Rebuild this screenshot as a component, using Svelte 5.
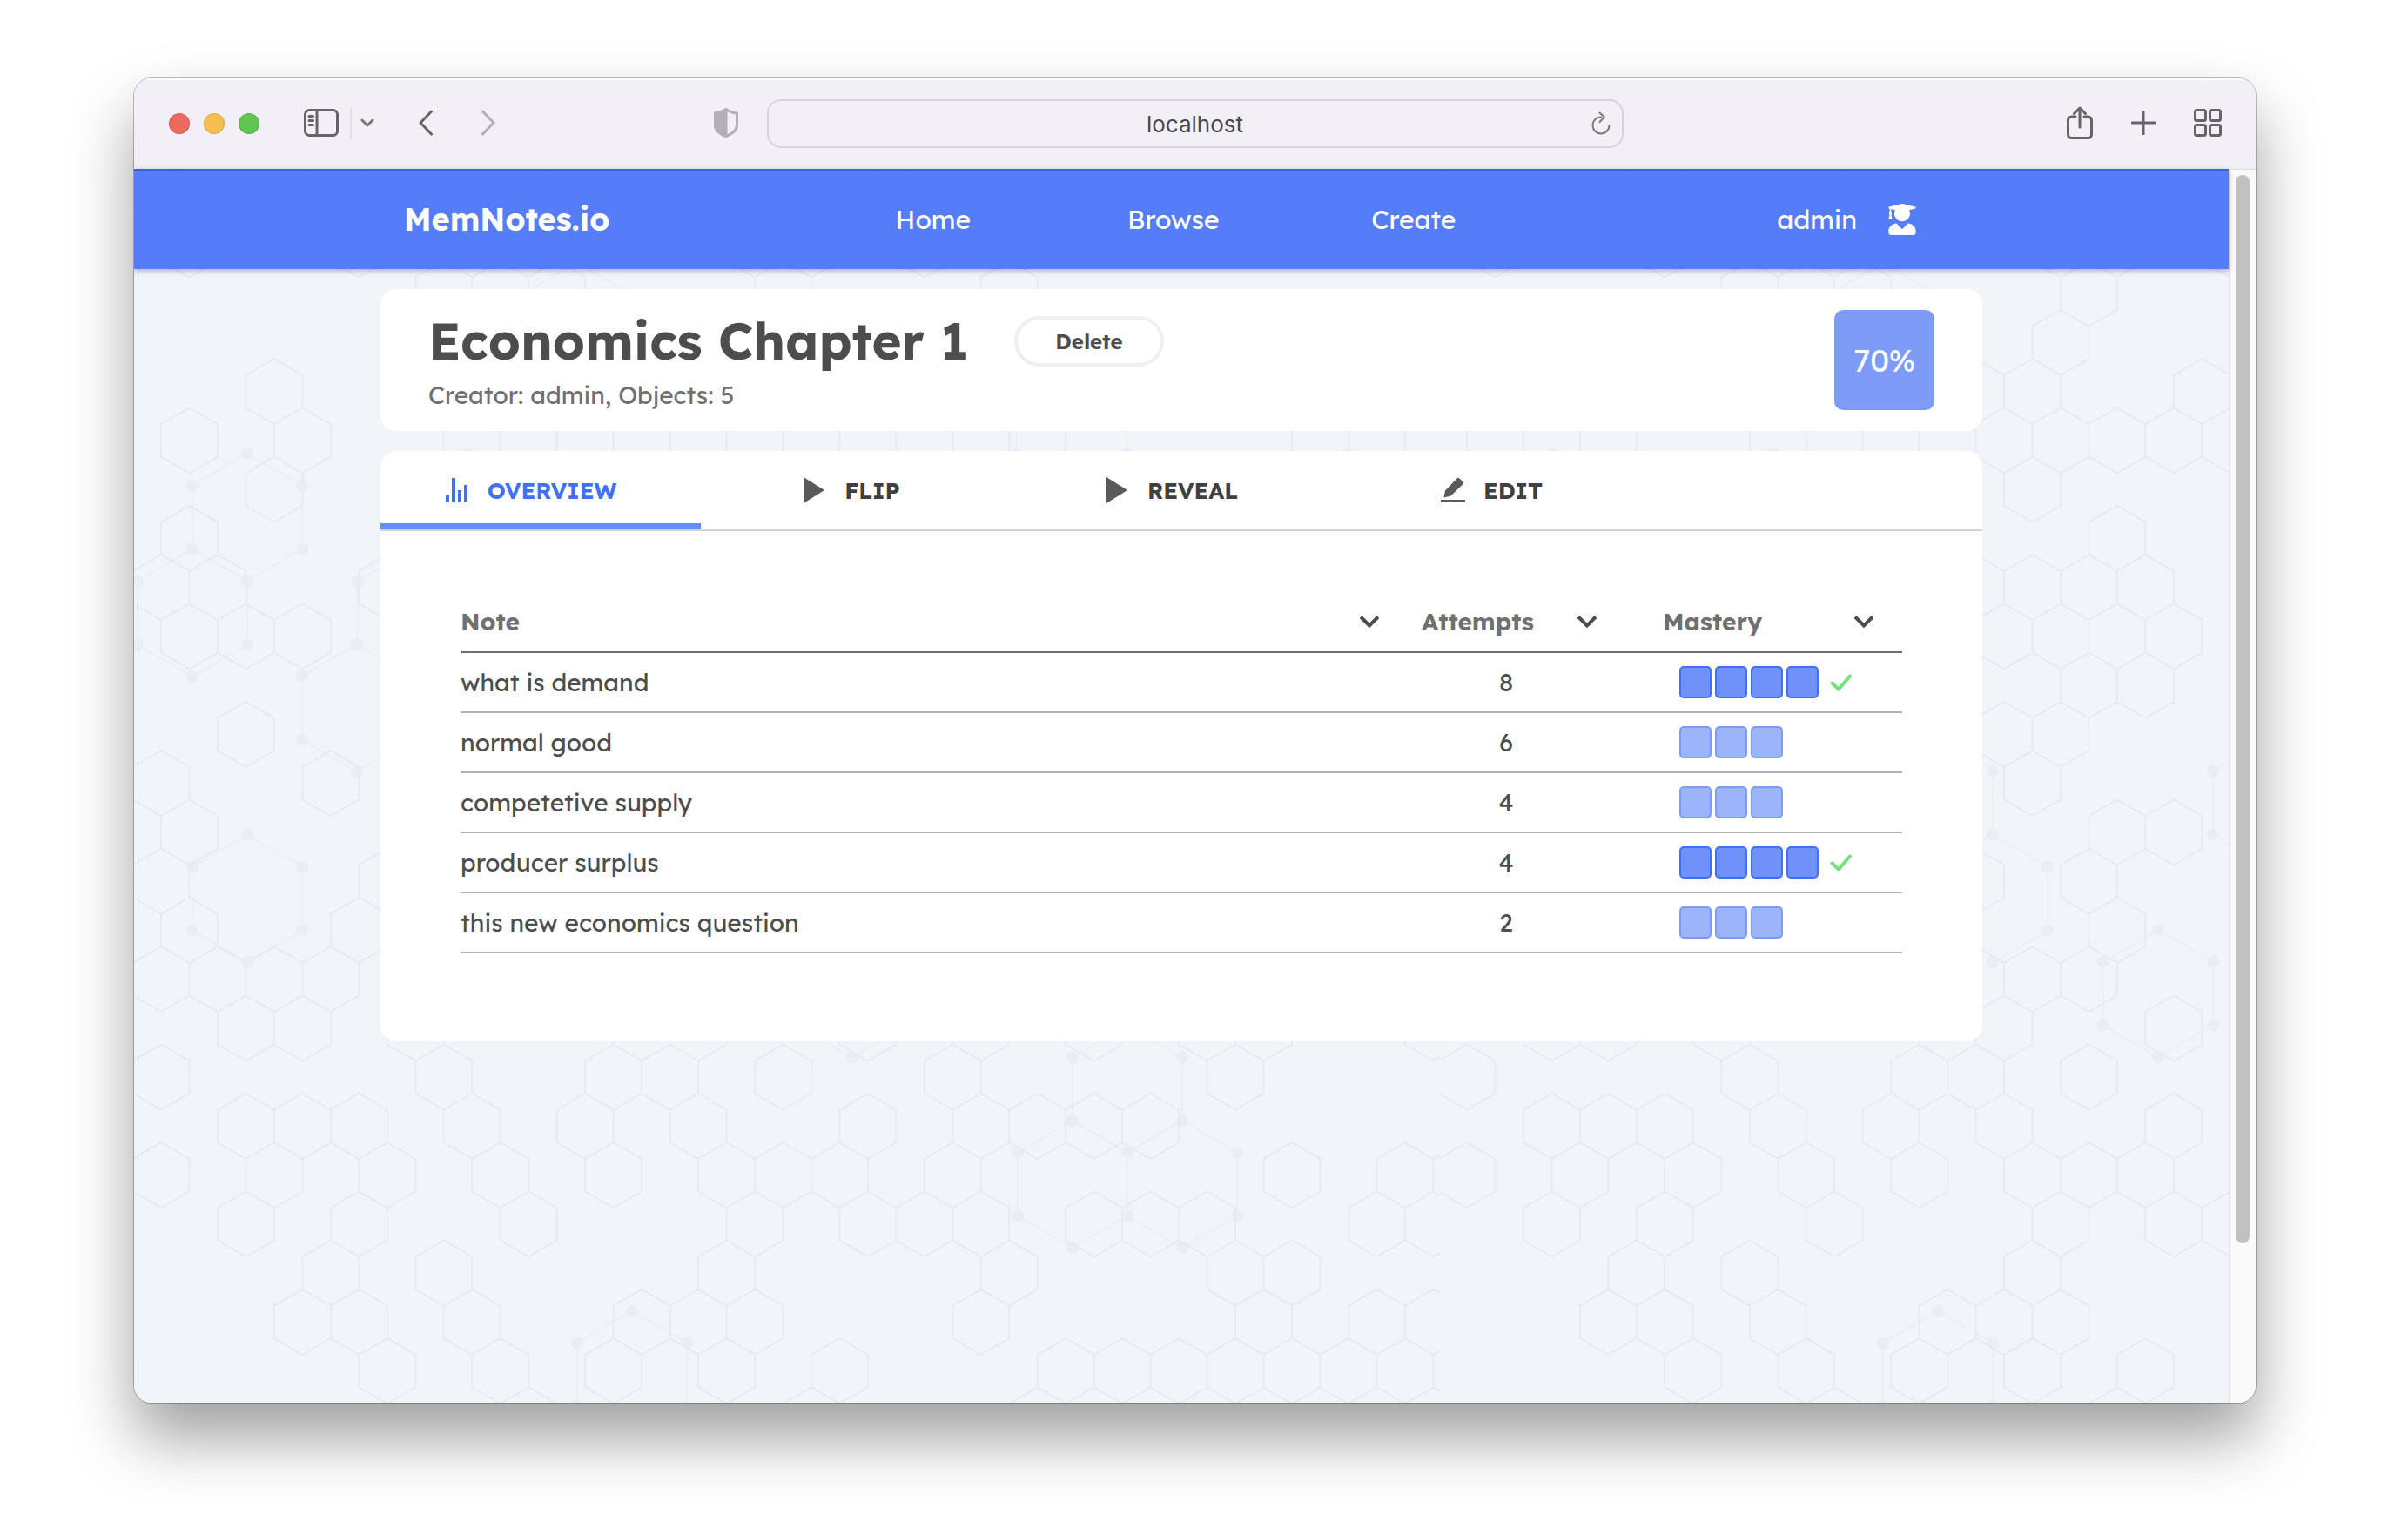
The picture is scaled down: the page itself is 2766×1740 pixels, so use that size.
<script>
  const notes = [
    { text: 'what is demand', attempts: 8, mastery: 4 },
    { text: 'normal good', attempts: 6, mastery: 3 },
    { text: 'competetive supply', attempts: 4, mastery: 3 },
    { text: 'producer surplus', attempts: 4, mastery: 4 },
    { text: 'this new economics question', attempts: 2, mastery: 3 }
  ];

  const tabs = [
    { label: 'OVERVIEW', icon: 'chart' },
    { label: 'FLIP', icon: 'play' },
    { label: 'REVEAL', icon: 'play' },
    { label: 'EDIT', icon: 'pen' }
  ];
  let active = $state('OVERVIEW');

  const links = ['Home', 'Browse', 'Create'];

  const columns = [
    { label: 'Note', cls: 'note' },
    { label: 'Attempts', cls: 'attempts' },
    { label: 'Mastery', cls: 'mastery' }
  ];

  // Honeycomb backdrop: filled cells per row, odd rows shifted by half a cell.
  const cells = [
    [0, 3, 4, 7, 13],
    [0, 3, 5, 6, 10, 11, 13],
    [5, 7, 11, 15],
    [10],
    [2, 9, 10, 13],
    [0, 2, 5, 6, 7, 8, 9, 10, 11, 12, 13, 14, 15, 20, 21],
    [2, 10],
    [0, 11],
    [0, 1, 4, 9, 10, 11, 12],
    [0, 1, 2, 9, 10, 11, 12],
    [11, 12],
    [1, 9, 10],
    [0, 3, 10],
    [0, 11, 12],
    [0, 4, 9, 11],
    [0, 3, 11],
    [0, 1, 2, 3, 9, 10, 11],
    [1, 2, 4, 8, 9, 12, 14, 16, 18, 19, 22],
    [0, 5, 8, 9, 11, 14, 19],
    [1, 2, 3, 5, 7, 9, 12, 14, 15, 16, 17],
    [0, 2, 4, 6, 8, 10, 11, 12, 14, 20, 22, 23],
    [1, 3, 6, 10, 12, 13, 14, 16, 17, 18, 21, 22],
    [3, 5, 10, 15, 19, 20],
    [2, 3, 5, 8, 9, 10, 14, 19, 21, 22],
    [4, 6, 8, 10, 12, 16, 17, 18, 19, 20, 21, 22, 23],
    [6, 11, 15]
  ];
  const molecules = [
    [509, 181], [1077, 291], [130, 400], [383, 400], [1014, 400], [1141, 400], [1393, 400],
    [67, 510], [320, 510], [256, 619], [572, 728], [951, 728], [130, 838], [635, 838],
    [825, 947], [1141, 1057], [1078, 1166], [1204, 1166], [572, 1385]
  ];

  function corners(x, y, r) {
    const w = r * 0.866;
    return [
      [x, y - r], [x + w, y - r / 2], [x + w, y + r / 2],
      [x, y + r], [x - w, y + r / 2], [x - w, y - r / 2]
    ];
  }
  const outline = (x, y, r) => 'M' + corners(x, y, r).map((p) => p.join(' ')).join('L') + 'Z';

  const comb = cells
    .map((row, r) =>
      row.map((m) => outline(31 + 64.95 * m + (r % 2 ? 32.475 : 0), 30.6 + 56.25 * r, 37.5)).join('')
    )
    .join('');
  const bonds = molecules.map(([x, y]) => outline(x, y, 73)).join('');
  const atoms = molecules.flatMap(([x, y]) => corners(x, y, 73));
</script>

{#snippet chevron()}
  <svg class="chev" viewBox="0 0 24 16" aria-hidden="true"><path d="M2 2.500l10 10 10-10" /></svg>
{/snippet}

<div class="desktop">
  <div class="window">
    <header class="toolbar">
      <div class="left">
        <div class="lights"><i class="red"></i><i class="yellow"></i><i class="green"></i></div>
        <button class="side" aria-label="Sidebar">
          <svg width="40" height="32" viewBox="0 0 40 32"><rect x="1.500" y="1.500" width="37" height="29" rx="5" /><path d="M15 2v28M6 8.500h4.500M6 13.500h4.500M6 18.500h4.500" /></svg>
        </button>
        <span class="rule"></span>
        <button class="more" aria-label="Sidebar options">
          <svg width="16" height="10" viewBox="0 0 16 10"><path d="M2 2l6 6 6-6" /></svg>
        </button>
        <button class="back" aria-label="Back">
          <svg width="18" height="30" viewBox="0 0 18 30"><path d="M15.500 2L3 15l12.500 13" /></svg>
        </button>
        <button class="fwd" aria-label="Forward">
          <svg width="18" height="30" viewBox="0 0 18 30"><path d="M2.500 2L15 15 2.500 28" /></svg>
        </button>
        <button class="shield" aria-label="Privacy report">
          <svg width="28" height="34" viewBox="0 0 28 34"><path d="M14 1.500C10 4.500 6 5.500 1.500 6v13c0 7 5 10 12.500 13.500C21.500 29 26.500 26 26.500 19V6C22 5.500 18 4.500 14 1.500z" /><path class="half" d="M14 1.500C10 4.500 6 5.500 1.500 6v13c0 7 5 10 12.500 13.500z" /></svg>
        </button>
      </div>
      <form class="address">
        <input aria-label="Address" value="localhost" />
        <button type="button" aria-label="Reload">
          <svg width="24" height="28" viewBox="0 0 24 28"><path d="M12 6.500a9.500 9.500 0 1 0 9.500 9.500M10.500 1.500l5.500 5-5.500 5.500" /></svg>
        </button>
      </form>
      <div class="right">
        <button aria-label="Share">
          <svg width="30" height="38" viewBox="0 0 30 38"><path d="M10 12H5.500a4 4 0 0 0-4 4v16.500a4 4 0 0 0 4 4h19a4 4 0 0 0 4-4V16a4 4 0 0 0-4-4H20M15 24V2.500M8.500 8.500l6.500-6.500 6.500 6.500" /></svg>
        </button>
        <button aria-label="New tab">
          <svg width="28" height="28" viewBox="0 0 28 28"><path d="M14 1v26M1 14h26" /></svg>
        </button>
        <button aria-label="Tab overview">
          <svg width="32" height="32" viewBox="0 0 32 32"><rect x="1.500" y="1.500" width="12" height="12" rx="2" /><rect x="18.500" y="1.500" width="12" height="12" rx="2" /><rect x="1.500" y="18.500" width="12" height="12" rx="2" /><rect x="18.500" y="18.500" width="12" height="12" rx="2" /></svg>
        </button>
      </div>
    </header>

    <div class="viewport">
      <div class="page">
        <svg class="backdrop" aria-hidden="true">
          <defs>
            <pattern id="comb" width="1500" height="1500" patternUnits="userSpaceOnUse">
              <path class="bonds" d={bonds} />
              {#each atoms as [x, y]}
                <circle cx={x} cy={y} r="7" />
              {/each}
              <path class="comb" d={comb} />
            </pattern>
          </defs>
          <rect width="100%" height="100%" fill="url(#comb)" />
        </svg>

        <nav class="navbar">
          <div class="container bar">
            <a class="brand" href="#home">MemNotes.io</a>
            {#each links as link}
              <a class="link" href="#{link}">{link}</a>
            {/each}
            <a class="user" href="#profile">
              admin
              <svg width="32" height="36" viewBox="0 0 448 512" aria-hidden="true"><path d="M319.4 320.6L224 416l-95.4-95.4C57.1 323.7 0 382.2 0 454.4v9.6c0 26.500 21.500 48 48 48h352c26.500 0 48-21.500 48-48v-9.600c0-72.200-57.100-130.700-128.600-133.800zM13.600 79.800l6.400 1.500v58.400c-7 4.200-12 11.500-12 20.300 0 8.400 4.600 15.400 11.100 19.700L3.500 242c-1.700 6.900 2.100 14 7.600 14h41.800c5.500 0 9.300-7.100 7.600-14l-15.600-62.300C51.400 175.400 56 168.400 56 160c0-8.800-5-16.100-12-20.300V87.100l66 15.900c-8.600 17.200-14 36.400-14 57 0 70.700 57.300 128 128 128s128-57.300 128-128c0-20.600-5.300-39.800-14-57l96.300-23.200c18.200-4.400 18.200-27.100 0-31.500l-190.400-46c-13-3.100-26.700-3.100-39.700 0L13.600 48.200c-18.100 4.400-18.100 27.200 0 31.600z" /></svg>
            </a>
          </div>
        </nav>

        <main class="container">
          <section class="card head">
            <div>
              <div class="titlerow">
                <h1>Economics Chapter 1</h1>
                <button class="delete">Delete</button>
              </div>
              <p>Creator: admin, Objects: 5</p>
            </div>
            <div class="score">70%</div>
          </section>

          <section class="card">
            <div class="tabs" role="tablist">
              {#each tabs as tab}
                <button
                  role="tab"
                  aria-selected={active === tab.label}
                  class:active={active === tab.label}
                  onclick={() => (active = tab.label)}
                >
                  <svg width="30" height="30" viewBox="0 0 30 30" aria-hidden="true">
                    {#if tab.icon === 'chart'}
                      <path d="M2 20h4v9H2zM9 1h4v28H9zM16 15h4v14h-4zM23 9h4v20h-4z" />
                    {:else if tab.icon === 'play'}
                      <path d="M3 0l24 15L3 30z" />
                    {:else}
                      <path d="M1 26h28v3H1zM19.500 1.500q1.500-1.500 3 0l4 4q1 1 0 2.500L12.500 21.500 4.500 23.500l1.500-8z" />
                    {/if}
                  </svg>
                  {tab.label}
                </button>
              {/each}
            </div>

            <div class="body">
              <table>
                <thead>
                  <tr>
                    {#each columns as col}
                      <th class={col.cls}>
                        <button>{col.label}{@render chevron()}</button>
                      </th>
                    {/each}
                  </tr>
                </thead>
                <tbody>
                  {#each notes as note}
                    <tr>
                      <td>{note.text}</td>
                      <td class="count">{note.attempts}</td>
                      <td>
                        <div class="level" class:full={note.mastery === 4}>
                          {#each Array(note.mastery) as _}
                            <span></span>
                          {/each}
                          {#if note.mastery === 4}
                            <svg width="26" height="20" viewBox="0 0 26 20" aria-label="Mastered"><path d="M2.500 10.500l7.500 7L23 2.500" /></svg>
                          {/if}
                        </div>
                      </td>
                    </tr>
                  {/each}
                </tbody>
              </table>
            </div>
          </section>
        </main>
      </div>
      <div class="scrollbar"><div class="thumb"></div></div>
    </div>
  </div>
</div>

<style>
  :global(body) {
    margin: 0;
    background: #fff;
  }
  .desktop {
    box-sizing: border-box;
    min-height: 100vh;
    padding: 90px 175px 129px 154px;
    display: flex;
    font-family: Lexend, Inter, 'Open Sans', sans-serif;
    color: #4d4d4d;
  }
  .window {
    flex: 1;
    display: flex;
    flex-direction: column;
    border-radius: 20px;
    overflow: hidden;
    box-shadow:
      0 0 0 1px rgba(0, 0, 0, 0.25),
      0 40px 72px rgba(0, 0, 0, 0.38);
  }
  button {
    font: inherit;
    color: inherit;
    background: none;
    border: 0;
    padding: 0;
    cursor: pointer;
  }
  svg {
    display: block;
    flex: none;
  }

  .toolbar {
    display: grid;
    grid-template-columns: 1fr minmax(0, 984px) 1fr;
    align-items: center;
    height: 104px;
    background: #f3eff7;
    box-shadow: inset 0 2px 0 #fbfafc;
  }
  .toolbar svg {
    fill: none;
    stroke: #67636b;
    stroke-width: 3;
    stroke-linecap: round;
    stroke-linejoin: round;
  }
  .left {
    display: flex;
    align-items: center;
    padding: 0 33px 0 40px;
  }
  .left button, .right button {
    margin-bottom: 2px;
  }
  .lights {
    display: flex;
    gap: 16px;
  }
  .lights i {
    width: 24px;
    height: 24px;
    border-radius: 50%;
    box-shadow: inset 0 0 0 1px rgba(0, 0, 0, 0.12);
  }
  .red { background: #ed6a5e; }
  .yellow { background: #f5bf4f; }
  .green { background: #61c554; }
  .side { margin-left: 51px; }
  .rule {
    width: 2px;
    height: 36px;
    margin: 0 10px 0 13px;
    background: #e3dfe7;
  }
  .toolbar .more svg { stroke: #7b777f; }
  .back { margin-left: 50px; }
  .fwd { margin-left: 54px; }
  .toolbar .fwd svg { stroke: #b3afb7; }
  .left .shield { margin-left: auto; }
  .toolbar .shield svg { stroke: #b3afb7; }
  .toolbar .half { fill: #b3afb7; }
  .address {
    display: flex;
    align-items: center;
    box-sizing: border-box;
    height: 56px;
    padding: 0 12px 0 36px;
    border: 2px solid #d7d3db;
    border-radius: 16px;
  }
  .address input {
    flex: 1;
    min-width: 0;
    border: 0;
    background: none;
    outline: 0;
    text-align: center;
    font: 26px Inter, sans-serif;
    color: #4a484c;
  }
  .toolbar .address svg {
    stroke: #7b777f;
    stroke-width: 2;
  }
  .right {
    display: flex;
    align-items: center;
    justify-content: flex-end;
    gap: 44px;
    padding-right: 39px;
  }

  .viewport {
    flex: 1;
    display: flex;
    background: #f1f5fa;
  }
  .page {
    position: relative;
    flex: 1;
    min-width: 0;
  }
  .backdrop {
    position: absolute;
    inset: 0;
    width: 100%;
    height: 100%;
  }
  .comb, .bonds {
    fill: none;
    stroke: #e7eaf0;
    stroke-width: 2;
  }
  .bonds { stroke: #ebeff4; }
  .backdrop circle { fill: #eaedf3; }
  .scrollbar {
    box-sizing: border-box;
    width: 31px;
    padding: 6px 7px 0 6px;
    background: #fafafa;
    border-left: 2px solid #e8e8e8;
    border-top: 1px solid #d9d9d9;
  }
  .thumb {
    height: 87%;
    border-radius: 8px;
    background: #c1c1c1;
  }

  .navbar {
    position: relative;
    background: rgba(68, 112, 248, 0.9);
    box-shadow:
      inset 0 2px 0 #3565dd,
      0 2px 6px rgba(0, 0, 0, 0.3);
  }
  .container {
    position: relative;
    box-sizing: border-box;
    max-width: 1840px;
    margin: 0 auto;
  }
  .bar {
    display: grid;
    grid-template-columns: 27% 15% 15% 15% 1fr;
    align-items: center;
    height: 115px;
    font-size: 30px;
    font-weight: 400;
  }
  .bar a {
    color: #fff;
    text-decoration: none;
  }
  .brand {
    padding-left: 27px;
    font-size: 36px;
    font-weight: 700;
  }
  .link { text-align: center; }
  .user {
    display: flex;
    align-items: center;
    justify-content: flex-end;
    gap: 36px;
    padding-right: 76px;
  }
  .user svg { fill: #fff; }

  main {
    display: grid;
    gap: 23px;
    padding: 23px 0;
  }
  .card {
    background: #fff;
    border-radius: 18px;
  }
  .head {
    display: flex;
    justify-content: space-between;
    align-items: center;
    height: 163px;
    box-sizing: border-box;
    padding: 0 55px;
  }
  .titlerow {
    display: flex;
    align-items: center;
    gap: 52px;
  }
  h1 {
    margin: 0;
    font-size: 58px;
    line-height: 72px;
    font-weight: 700;
  }
  .delete {
    box-sizing: border-box;
    width: 172px;
    height: 58px;
    border: 4px solid #f0f0f0;
    border-radius: 29px;
    font-size: 24px;
    font-weight: 700;
  }
  p {
    margin: 8px 0 0;
    font-size: 28px;
    line-height: 36px;
    color: #707070;
  }
  .score {
    display: grid;
    place-items: center;
    width: 115px;
    height: 115px;
    border-radius: 10px;
    background: #7c9cf8;
    color: #fff;
    font-size: 36px;
    font-weight: 400;
  }

  .tabs {
    display: flex;
    border-bottom: 2px solid #d4d4d4;
  }
  .tabs button {
    box-sizing: border-box;
    display: flex;
    align-items: center;
    justify-content: center;
    gap: 20px;
    width: 20%;
    height: 90px;
    padding-right: 24px;
    padding-top: 7px;
    border-bottom: 7px solid transparent;
    font-size: 26px;
    font-weight: 700;
    color: #404040;
  }
  .tabs svg { fill: #5a5a5a; }
  .tabs .active {
    color: #4070f4;
    border-color: #648ff8;
  }
  .tabs .active svg { fill: #4070f4; }

  .body { padding: 69px 92px 101px; }
  table {
    width: 100%;
    table-layout: fixed;
    border-collapse: separate;
    border-spacing: 0;
    font-size: 28px;
  }
  th, td {
    box-sizing: border-box;
    height: 69px;
    padding: 0;
    text-align: left;
    border-bottom: 2px solid #b2b2b2;
  }
  th {
    height: 71px;
    border-color: #707070;
  }
  th button {
    display: flex;
    align-items: center;
    justify-content: space-between;
    width: 100%;
    font-weight: 700;
    color: #707070;
  }
  .note { padding-right: 48px; }
  .attempts {
    width: 277px;
    padding-right: 75px;
  }
  .mastery {
    width: 275px;
    padding-right: 32px;
  }
  td.count {
    padding-right: 83px;
    text-align: center;
  }
  .chev {
    width: 24px;
    height: 16px;
    fill: none;
    stroke: #4d4d4d;
    stroke-width: 4;
  }
  .level {
    display: flex;
    align-items: center;
    gap: 4px;
    padding-left: 19px;
  }
  .level span {
    box-sizing: border-box;
    width: 37px;
    height: 37px;
    border: 2px solid #7c9cf8;
    border-radius: 5px;
    background: #9cb4fa;
  }
  .level.full span {
    border-color: #4070f4;
    background: #7092f8;
  }
  .level svg {
    margin-left: 9px;
    fill: none;
    stroke: #75e07c;
    stroke-width: 4;
    stroke-linecap: round;
    stroke-linejoin: round;
  }
</style>
